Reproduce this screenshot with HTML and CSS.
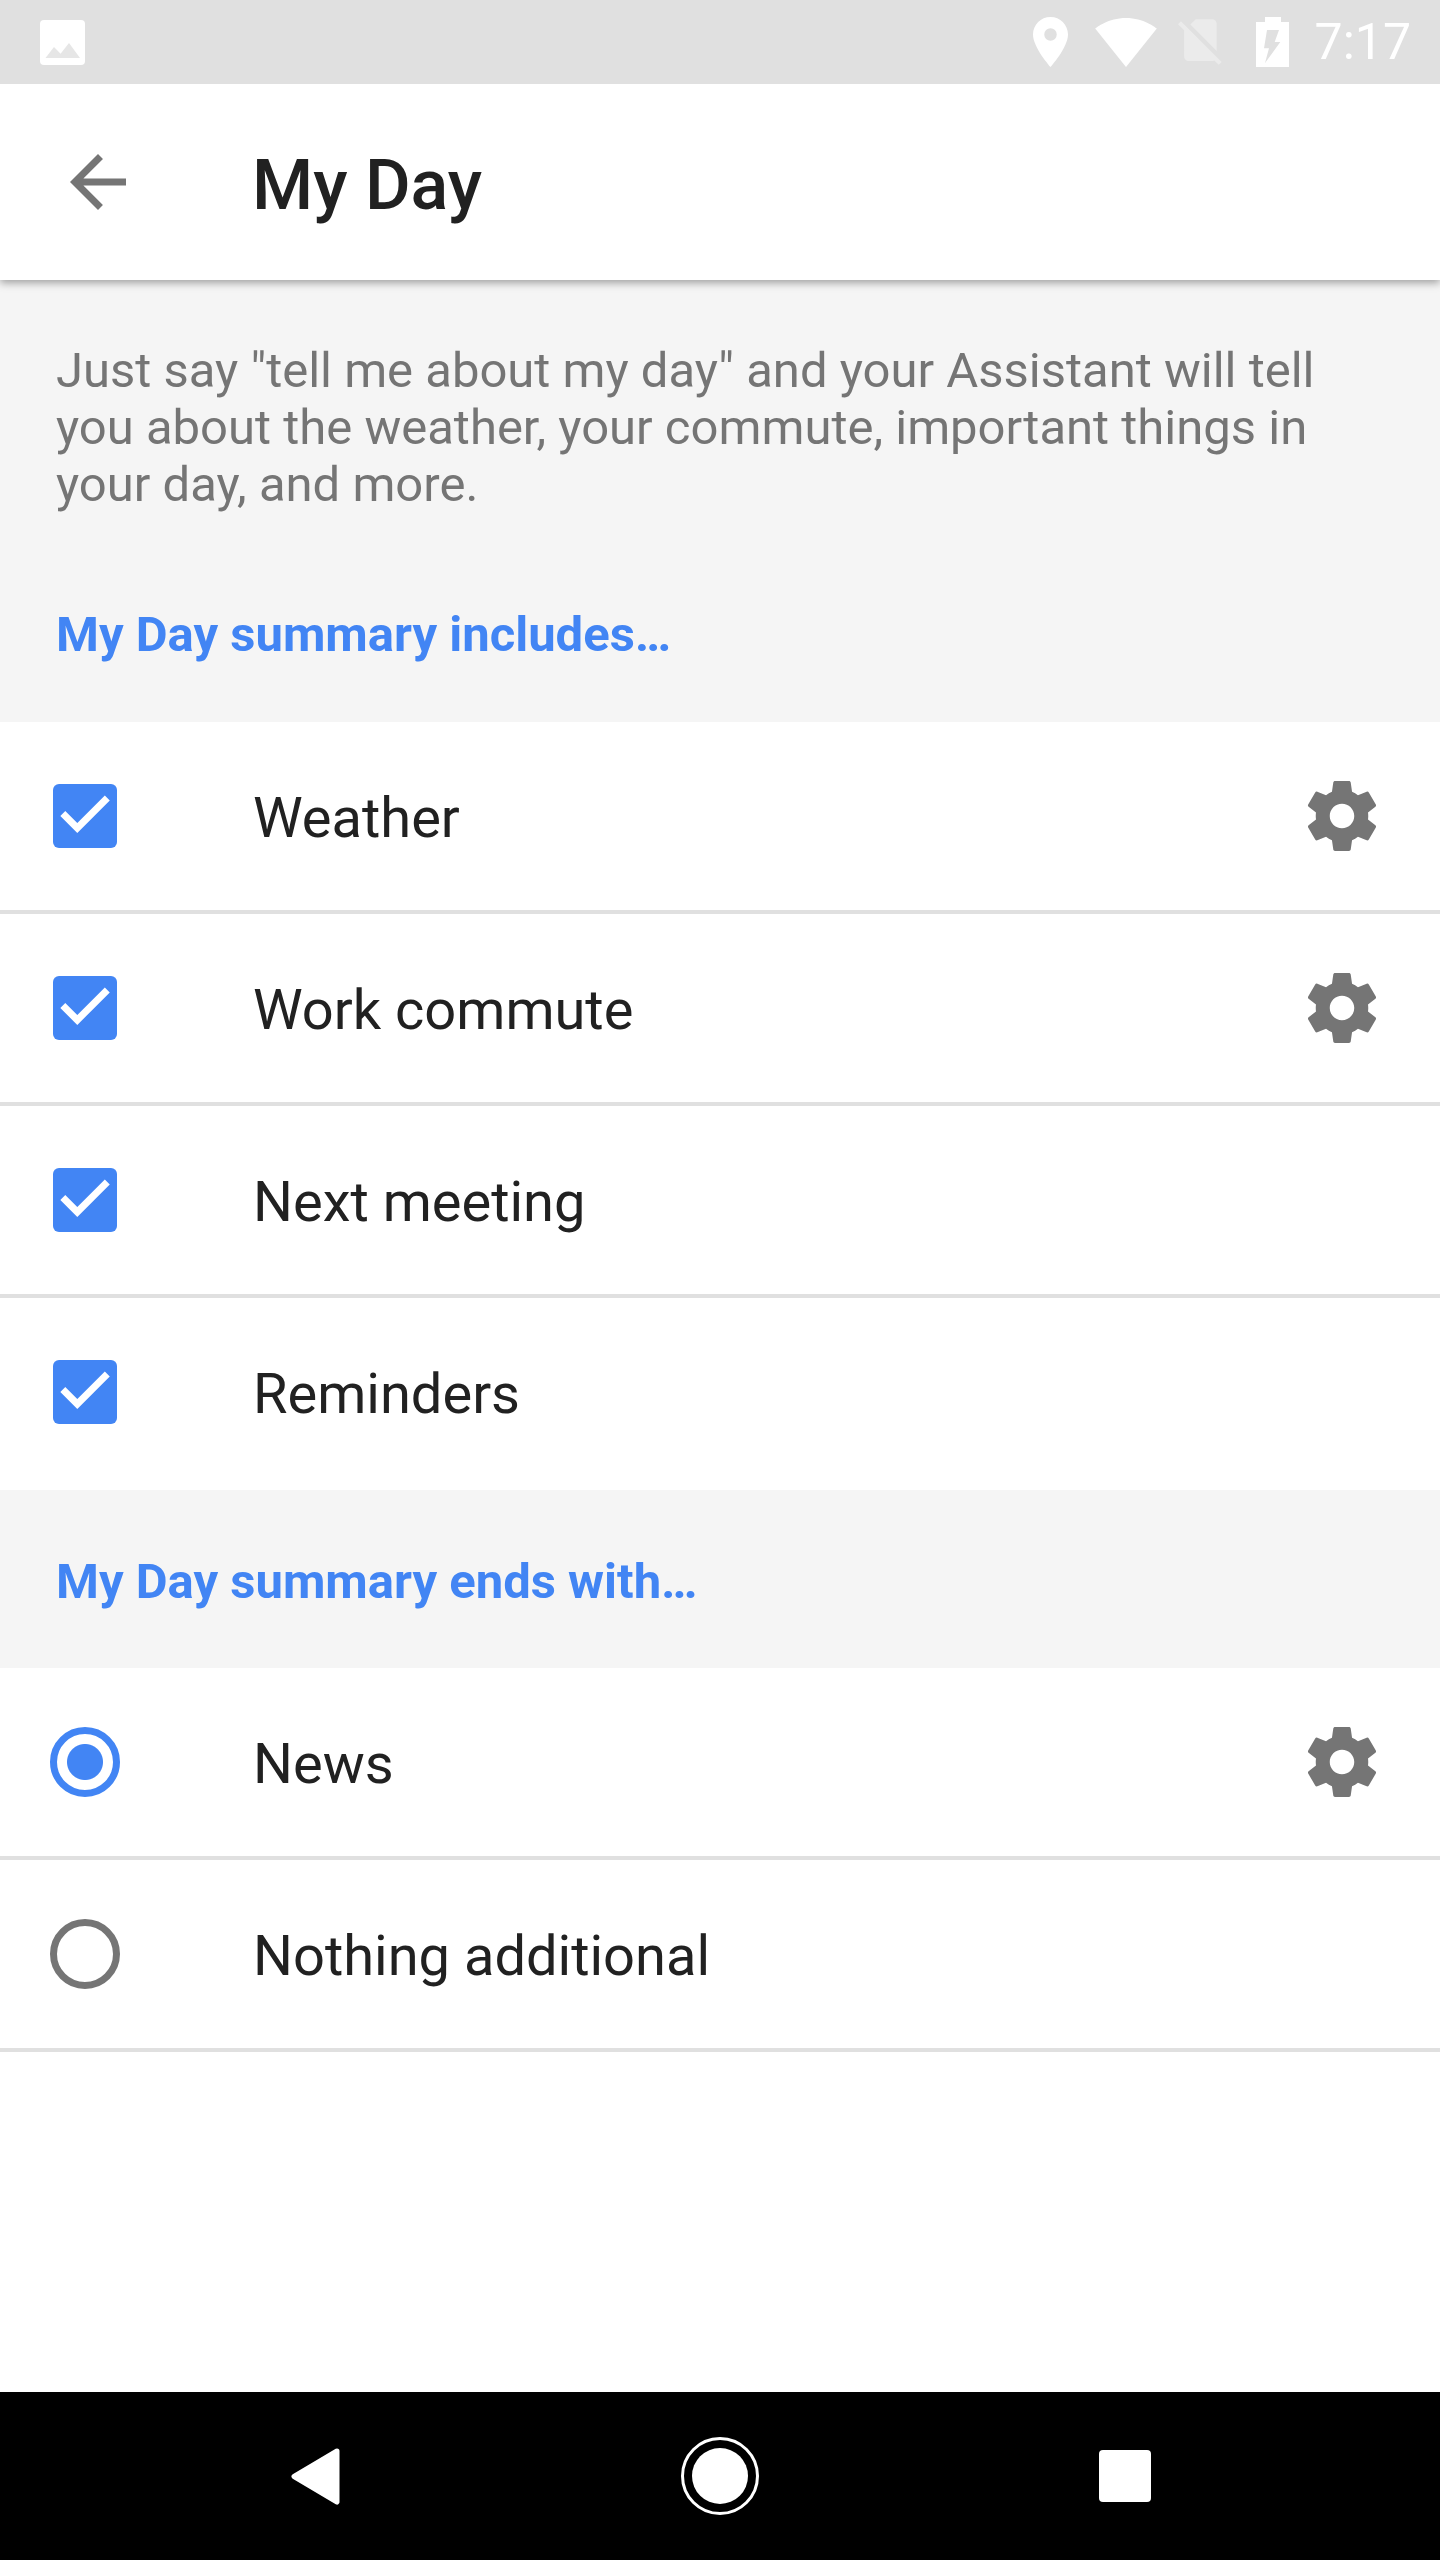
FILE: index.html
```html
<!DOCTYPE html>
<html lang="en">
<head>
    <meta charset="UTF-8">
    <meta name="viewport" content="width=device-width, initial-scale=1.0">
    <title>My Day</title>
    <link rel="stylesheet" href="styles.css">
</head>
<body>

<div class="phone">
    <!-- Status bar -->
    <div class="status-bar">
        <svg class="status-gallery" viewBox="0 0 45 45"><rect width="45" height="45" rx="4" fill="#fff"/><path d="M5.5 38L14 27l6.6 6.7L29 23l11 15z" fill="#e6e6e6"/></svg>
        <svg class="status-location" viewBox="5 2 14 20"><path fill="#fff" fill-rule="evenodd" d="M12 2C8.13 2 5 5.13 5 9c0 5.25 7 13 7 13s7-7.75 7-13c0-3.87-3.13-7-7-7zm0 9.5a2.5 2.5 0 1 1 0-5 2.5 2.5 0 0 1 0 5z"/></svg>
        <svg class="status-wifi" viewBox="0.36 3 23.28 18.5"><path fill="#fff" d="M12.01 21.49L23.64 7c-.45-.34-4.93-4-11.64-4C5.28 3 .81 6.66.36 7l11.63 14.49.01.01.01-.01z"/></svg>
        <svg class="status-nosim" viewBox="2.38 3 19.74 19.62"><path fill="#fff" fill-opacity="0.35" d="M18.99 5c0-1.1-.89-2-1.99-2h-7L7.66 5.34 19 16.68 18.99 5zM3.65 3.88L2.38 5.15 5 7.77V19c0 1.1.9 2 2 2h10.01c.35 0 .67-.1.96-.26l1.88 1.88 1.27-1.27L3.65 3.88z"/></svg>
        <svg class="status-battery" viewBox="0 0 33 50"><path fill="#fff" fill-rule="evenodd" d="M9 0h16v5h8v45H0V5h9zM11 13h12l-4.3 12h5.6L9 46l4-14.700H8z"/></svg>
        <span class="status-time">7:17</span>
    </div>

    <!-- Toolbar -->
    <div class="toolbar">
        <svg class="back-arrow" viewBox="0 0 24 24"><path d="M20 11H7.830l5.590-5.590L12 4l-8 8 8 8 1.410-1.410L7.830 13H20v-2z"/></svg>
        <h1 class="toolbar-title">My Day</h1>
    </div>

    <div class="content">
        <div class="intro">
            <p class="intro-text">Just say "tell me about my day" and your Assistant will tell you about the weather, your commute, important things in your day, and more.</p>
            <h2 class="section-title">My Day summary includes…</h2>
        </div>

        <div class="row">
            <div class="row-control"><svg class="checkbox" viewBox="0 0 64 64"><rect width="64" height="64" rx="6"/><path d="M9.800 29.500L24.300 44l30-30"/></svg></div>
            <div class="row-label">Weather</div>
            <svg class="gear" viewBox="0 0 24 24"><path d="M19.430 12.980c.04-.32.07-.64.07-.98s-.03-.66-.07-.98l2.110-1.650c.19-.15.24-.42.12-.64l-2-3.460c-.12-.22-.39-.3-.61-.22l-2.490 1c-.52-.4-1.080-.73-1.690-.98l-.38-2.650C14.460 2.180 14.250 2 14 2h-4c-.25 0-.46.18-.49.42l-.38 2.650c-.61.25-1.170.59-1.690.98l-2.490-1c-.23-.09-.49 0-.61.22l-2 3.460c-.13.22-.07.49.12.64l2.110 1.650c-.04.32-.07.65-.07.98s.03.66.07.98l-2.110 1.650c-.19.15-.24.42-.12.64l2 3.460c.12.22.39.3.61.22l2.490-1c.52.4 1.080.73 1.690.98l.38 2.650c.03.24.24.42.49.42h4c.25 0 .46-.18.49-.42l.38-2.650c.61-.25 1.170-.59 1.690-.98l2.490 1c.23.09.49 0 .61-.22l2-3.460c.12-.22.07-.49-.12-.64l-2.110-1.650zM12 15.500c-1.930 0-3.500-1.570-3.500-3.500s1.570-3.500 3.500-3.500 3.500 1.570 3.500 3.500-1.570 3.500-3.500 3.500z"/></svg>
        </div>
        <div class="row">
            <div class="row-control"><svg class="checkbox" viewBox="0 0 64 64"><rect width="64" height="64" rx="6"/><path d="M9.800 29.500L24.300 44l30-30"/></svg></div>
            <div class="row-label">Work commute</div>
            <svg class="gear" viewBox="0 0 24 24"><path d="M19.430 12.980c.04-.32.07-.64.07-.98s-.03-.66-.07-.98l2.110-1.650c.19-.15.24-.42.12-.64l-2-3.460c-.12-.22-.39-.3-.61-.22l-2.490 1c-.52-.4-1.080-.73-1.690-.98l-.38-2.650C14.460 2.180 14.250 2 14 2h-4c-.25 0-.46.18-.49.42l-.38 2.650c-.61.25-1.170.59-1.690.98l-2.490-1c-.23-.09-.49 0-.61.22l-2 3.460c-.13.22-.07.49.12.64l2.110 1.650c-.04.32-.07.65-.07.98s.03.66.07.98l-2.110 1.650c-.19.15-.24.42-.12.64l2 3.460c.12.22.39.3.61.22l2.490-1c.52.4 1.080.73 1.690.98l.38 2.650c.03.24.24.42.49.42h4c.25 0 .46-.18.49-.42l.38-2.650c.61-.25 1.170-.59 1.690-.98l2.490 1c.23.09.49 0 .61-.22l2-3.460c.12-.22.07-.49-.12-.64l-2.110-1.650zM12 15.500c-1.930 0-3.500-1.570-3.500-3.500s1.570-3.500 3.500-3.500 3.500 1.570 3.500 3.500-1.570 3.500-3.500 3.500z"/></svg>
        </div>
        <div class="row">
            <div class="row-control"><svg class="checkbox" viewBox="0 0 64 64"><rect width="64" height="64" rx="6"/><path d="M9.800 29.500L24.300 44l30-30"/></svg></div>
            <div class="row-label">Next meeting</div>
        </div>
        <div class="row row-last">
            <div class="row-control"><svg class="checkbox" viewBox="0 0 64 64"><rect width="64" height="64" rx="6"/><path d="M9.800 29.500L24.300 44l30-30"/></svg></div>
            <div class="row-label">Reminders</div>
        </div>

        <div class="section-band">
            <h2 class="section-title">My Day summary ends with…</h2>
        </div>

        <div class="row">
            <div class="row-control"><div class="radio radio-on"></div></div>
            <div class="row-label">News</div>
            <svg class="gear" viewBox="0 0 24 24"><path d="M19.430 12.980c.04-.32.07-.64.07-.98s-.03-.66-.07-.98l2.110-1.650c.19-.15.24-.42.12-.64l-2-3.460c-.12-.22-.39-.3-.61-.22l-2.490 1c-.52-.4-1.080-.73-1.690-.98l-.38-2.650C14.460 2.180 14.250 2 14 2h-4c-.25 0-.46.18-.49.42l-.38 2.650c-.61.25-1.170.59-1.690.98l-2.490-1c-.23-.09-.49 0-.61.22l-2 3.460c-.13.22-.07.49.12.64l2.110 1.650c-.04.32-.07.65-.07.98s.03.66.07.98l-2.110 1.650c-.19.15-.24.42-.12.64l2 3.460c.12.22.39.3.61.22l2.490-1c.52.4 1.080.73 1.690.98l.38 2.650c.03.24.24.42.49.42h4c.25 0 .46-.18.49-.42l.38-2.650c.61-.25 1.170-.59 1.690-.98l2.490 1c.23.09.49 0 .61-.22l2-3.460c.12-.22.07-.49-.12-.64l-2.110-1.650zM12 15.500c-1.930 0-3.500-1.570-3.500-3.500s1.570-3.500 3.500-3.500 3.500 1.570 3.500 3.500-1.570 3.500-3.500 3.500z"/></svg>
        </div>
        <div class="row">
            <div class="row-control"><div class="radio"></div></div>
            <div class="row-label">Nothing additional</div>
        </div>
    </div>

    <!-- Navigation bar -->
    <div class="nav-bar">
        <div class="nav-slot"><svg class="nav-back" viewBox="0 0 49 57"><path d="M46 3L3 28.500 46 54z"/></svg></div>
        <div class="nav-slot"><svg class="nav-home" viewBox="0 0 80 80"><circle cx="40" cy="40" r="37.500"/><circle class="nav-home-disc" cx="40" cy="40" r="28"/></svg></div>
        <div class="nav-slot"><div class="nav-square"></div></div>
    </div>
</div>

</body>
</html>
```

FILE: styles.css
```css
body {
    font-family: 'Roboto', sans-serif;
    margin: 0;
    padding: 0;
    background-color: #fff;
}
h1, h2, p {
    margin: 0;
}
.phone {
    display: flex;
    flex-direction: column;
    height: 2560px;
    overflow: hidden;
}
.status-bar {
    flex: none;
    position: relative;
    z-index: 2;
    height: 84px;
    display: flex;
    align-items: center;
    background-color: #e0e0e0;
    padding: 0 29px 0 40px;
}
.status-gallery {
    width: 45px;
    height: 45px;
}
.status-location {
    width: 35px;
    height: 50px;
    margin-left: auto;
}
.status-wifi {
    width: 62px;
    height: 49px;
    margin-left: 27px;
}
.status-nosim {
    width: 46px;
    height: 46px;
    margin-left: 21px;
}
.status-battery {
    width: 33px;
    height: 50px;
    margin-left: 32px;
}
.status-time {
    margin-left: 26px;
    font-size: 50px;
    color: #fff;
}
.toolbar {
    flex: none;
    position: relative;
    z-index: 1;
    height: 196px;
    display: flex;
    align-items: center;
    background-color: #fff;
    box-shadow: 0 3px 8px rgba(0, 0, 0, 0.35);
}
.back-arrow {
    width: 84px;
    height: 84px;
    margin-left: 56px;
    fill: #757575;
}
.toolbar-title {
    margin-left: 112px;
    padding-top: 5px;
    font-size: 70px;
    font-weight: 500;
    color: #212121;
}
.content {
    flex: 1;
}
.intro {
    height: 442px;
    box-sizing: border-box;
    padding: 62px 56px 0;
    background-color: #f5f5f5;
}
.intro-text {
    font-size: 49px;
    line-height: 57px;
    color: #757575;
    height: 263px;
}
.section-title {
    font-size: 49px;
    font-weight: 700;
    line-height: 60px;
    color: #4285f4;
}
.section-band {
    height: 178px;
    box-sizing: border-box;
    padding: 62px 56px 0;
    background-color: #f5f5f5;
}
.row {
    height: 192px;
    box-sizing: border-box;
    display: flex;
    align-items: center;
    padding-right: 56px;
    border-bottom: 4px solid #e0e0e0;
}
.row-last {
    padding-bottom: 4px;
    border-bottom: none;
}
.row-control {
    flex: none;
    width: 170px;
    display: flex;
    justify-content: center;
}
.row-label {
    flex: 1;
    margin-left: 83px;
    padding-top: 4px;
    font-size: 56px;
    color: #212121;
}
.checkbox {
    width: 64px;
    height: 64px;
}
.checkbox rect {
    fill: #4285f4;
}
.checkbox path {
    fill: none;
    stroke: #fff;
    stroke-width: 7;
}
.gear {
    flex: none;
    width: 84px;
    height: 84px;
    fill: #757575;
}
.radio {
    width: 70px;
    height: 70px;
    box-sizing: border-box;
    border: 7px solid #757575;
    border-radius: 50%;
}
.radio-on {
    border-color: #4285f4;
    background: radial-gradient(circle, #4285f4 0, #4285f4 17.500px, #fff 18.500px);
}
.nav-bar {
    flex: none;
    height: 168px;
    display: flex;
    justify-content: center;
    align-items: center;
    background-color: #000;
}
.nav-slot {
    width: 405px;
    display: flex;
    justify-content: center;
    align-items: center;
}
.nav-back {
    width: 49px;
    height: 57px;
}
.nav-back path {
    fill: #fff;
    stroke: #fff;
    stroke-width: 5;
    stroke-linejoin: round;
}
.nav-home {
    width: 80px;
    height: 80px;
}
.nav-home circle {
    fill: none;
    stroke: #fff;
    stroke-width: 3;
}
.nav-home .nav-home-disc {
    fill: #fff;
    stroke: none;
}
.nav-square {
    width: 52px;
    height: 52px;
    border-radius: 4px;
    background-color: #fff;
}
```
